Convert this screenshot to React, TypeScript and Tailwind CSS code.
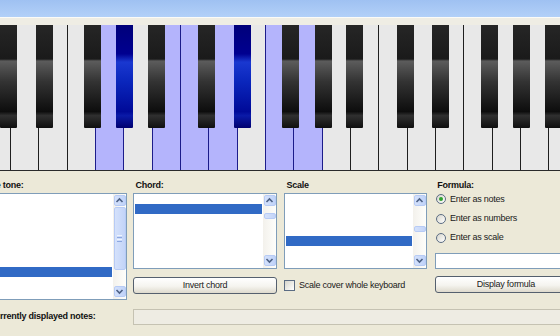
import React from 'react';

const KEY_W = 28.333;
const START_X = -17.333;
const LETTERS = ['C', 'D', 'E', 'F', 'G', 'A', 'B'];

// black key left offset from the white-key divider it sits on
const BLACK_OFFSET: Record<string, number> = { C: -11, D: -3.5, F: -12, G: -8, A: -4.5 };

const whiteLit = [4, 6, 7, 8, 10, 11];
const blackLit = [4, 8];

type BlackKey = { left: number; lit: boolean };

const whites = Array.from({ length: 21 }, (_, i) => LETTERS[i % 7]);

const blacks: BlackKey[] = whites
  .map((letter, i) => {
    const off = BLACK_OFFSET[letter];
    if (off === undefined) return null;
    return { left: START_X + (i + 1) * KEY_W + off, lit: blackLit.includes(i) };
  })
  .filter((b): b is BlackKey => b !== null);

function Keyboard() {
  return (
    <div className="relative h-[146px] overflow-hidden border-b border-[#2a2a2a]">
      <div className="ml-[-17.333px] flex h-full">
        {whites.map((letter, i) => {
          const lit = whiteLit.includes(i);
          const blueLine = lit || whiteLit.includes(i + 1);
          return (
            <div
              key={i}
              className={
                'h-full w-[28.333px] shrink-0 border-r ' +
                (lit ? 'bg-[#b4b4fc] ' : 'bg-[#e8e8e8] ') +
                (blueLine ? 'border-[#1c1c8a]' : 'border-[#1e1e1e]')
              }
              title={letter}
            />
          );
        })}
      </div>
      {blacks.map((b, i) => (
        <div
          key={i}
          style={{ left: b.left }}
          className={
            'absolute top-0 h-[103px] w-[17px] rounded-b-[1px] ' +
            (b.lit
              ? 'bg-[linear-gradient(to_bottom,#00007a_0%,#000090_28%,#1a38d0_36%,#0a26bc_55%,#000a98_84%,#0a1aa8_88%,#000070_100%)]'
              : 'bg-[linear-gradient(to_bottom,#262626_0%,#1a1a1a_33%,#5c5c5c_35%,#333333_55%,#0d0d0d_84%,#303030_88%,#0f0f0f_100%)]')
          }
        />
      ))}
    </div>
  );
}

function Chevron({ up }: { up?: boolean }) {
  return (
    <svg width="9" height="7" viewBox="0 0 9 7">
      <path
        d={up ? 'M1.5 5 L4.5 2 L7.5 5' : 'M1.5 2 L4.5 5 L7.5 2'}
        fill="none"
        stroke="#4d6185"
        strokeWidth="1.6"
      />
    </svg>
  );
}

function ArrowButton({ up }: { up?: boolean }) {
  return (
    <div className="flex h-[11px] items-center justify-center rounded-[2px] border border-[#b7cbf5] bg-[linear-gradient(to_right,#d4e1fb,#bfd2f8)]">
      <Chevron up={up} />
    </div>
  );
}

function Scrollbar({ thumbTop, thumbH }: { thumbTop: number; thumbH: number }) {
  return (
    <div className="flex w-[13px] shrink-0 flex-col bg-[linear-gradient(to_right,#f3f1ec,#fefefb)] px-[0.5px] py-[1.5px]">
      <ArrowButton up />
      <div className="flex flex-1 flex-col">
        <div style={{ height: thumbTop }} />
        <div
          style={{ height: thumbH }}
          className="flex items-center justify-center rounded-[2px] border border-[#b7cbf5] bg-[linear-gradient(to_right,#d4e1fb,#c3d4f8)]"
        >
          {thumbH > 20 && (
            <div className="flex flex-col gap-[1px]">
              <div className="h-[1px] w-[5px] bg-[#eef4fe]" />
              <div className="h-[1px] w-[5px] bg-[#8da8e0]" />
              <div className="h-[1px] w-[5px] bg-[#eef4fe]" />
              <div className="h-[1px] w-[5px] bg-[#8da8e0]" />
            </div>
          )}
        </div>
      </div>
      <ArrowButton />
    </div>
  );
}

function ListBox({
  height,
  selTop,
  thumbTop,
  thumbH,
}: {
  height: number;
  selTop: number;
  thumbTop: number;
  thumbH: number;
}) {
  return (
    <div style={{ height }} className="mt-[2px] flex border border-[#7f9db9] bg-white">
      <div className="flex-1 pl-[1px] pr-[1px]">
        <div style={{ height: selTop }} />
        <div className="h-[10.3px] bg-[#316ac5]" />
      </div>
      <Scrollbar thumbTop={thumbTop} thumbH={thumbH} />
    </div>
  );
}

function XpButton({ label }: { label: string }) {
  return (
    <div className="flex h-[17px] items-center justify-center rounded-[3px] border border-[#55606e] bg-[linear-gradient(to_bottom,#ffffff_0%,#f5f4ef_55%,#dedacd_100%)] text-[#1a1a1a]">
      {label}
    </div>
  );
}

function Radio({ checked, label }: { checked?: boolean; label: string }) {
  return (
    <div className="flex h-[19.4px] items-center pl-[0.5px]">
      <div className="flex h-[10px] w-[10px] items-center justify-center rounded-full border border-[#5b6c83] bg-[linear-gradient(135deg,#d6d5cc,#ffffff)]">
        {checked && <div className="h-[4px] w-[4px] rounded-full bg-[#2ea32e]" />}
      </div>
      <span className="ml-[4.5px] text-[#1a1a1a]">{label}</span>
    </div>
  );
}

export default function App() {
  return (
    <div className="h-[336px] w-[560px] overflow-hidden bg-[#ece9d8] font-['Liberation_Sans',Arial,sans-serif] text-[9px] leading-[11px] tracking-[-0.25px]">
      <div className="h-[17px] bg-[linear-gradient(to_bottom,#9fc1f2,#b2d0f8)]" />
      <div className="h-[8px] border-t border-[#fbfbf7] bg-[#efede4]" />
      <Keyboard />

      <div className="flex pt-[8.5px]">
        <div className="ml-[-20px] w-[147px] shrink-0">
          <div className="h-[11px] font-bold text-[#111]">Base tone:</div>
          <ListBox height={107} selTop={73.5} thumbTop={1} thumbH={63} />
        </div>

        <div className="ml-[6px] w-[144px] shrink-0">
          <div className="h-[11px] pl-[2.5px] font-bold text-[#111]">Chord:</div>
          <ListBox height={76} selTop={10.5} thumbTop={6.5} thumbH={6.6} />
          <div className="mt-[8px]">
            <XpButton label="Invert chord" />
          </div>
        </div>

        <div className="ml-[7px] w-[143px] shrink-0">
          <div className="h-[11px] pl-[2.5px] font-bold text-[#111]">Scale</div>
          <ListBox height={76} selTop={42} thumbTop={20} thumbH={5.5} />
          <div className="mt-[11px] flex h-[12px] items-center">
            <div className="h-[11px] w-[11px] border border-[#5b6c83] bg-[linear-gradient(135deg,#d6d5cc,#ffffff)]" />
            <span className="ml-[4px] text-[#1a1a1a]">Scale cover whole keyboard</span>
          </div>
        </div>

        <div className="ml-[8px] w-[142px] shrink-0">
          <div className="h-[11px] pl-[2.3px] font-bold text-[#111]">Formula:</div>
          <div className="-mt-[1px]">
            <Radio checked label="Enter as notes" />
            <Radio label="Enter as numbers" />
            <Radio label="Enter as scale" />
          </div>
          <div className="mt-[5px] h-[16px] border border-[#7f9db9] bg-white" />
          <div className="mt-[7.5px]">
            <XpButton label="Display formula" />
          </div>
        </div>
      </div>

      <div className="mt-[9px] flex h-[16px] items-center">
        <div className="ml-[-11.5px] w-[144.8px] shrink-0 font-bold text-[#111]">
          Currently displayed notes:
        </div>
        <div className="h-[16px] w-[450px] shrink-0 border border-[#c5c2b2] bg-[#eeece3]" />
      </div>
    </div>
  );
}
